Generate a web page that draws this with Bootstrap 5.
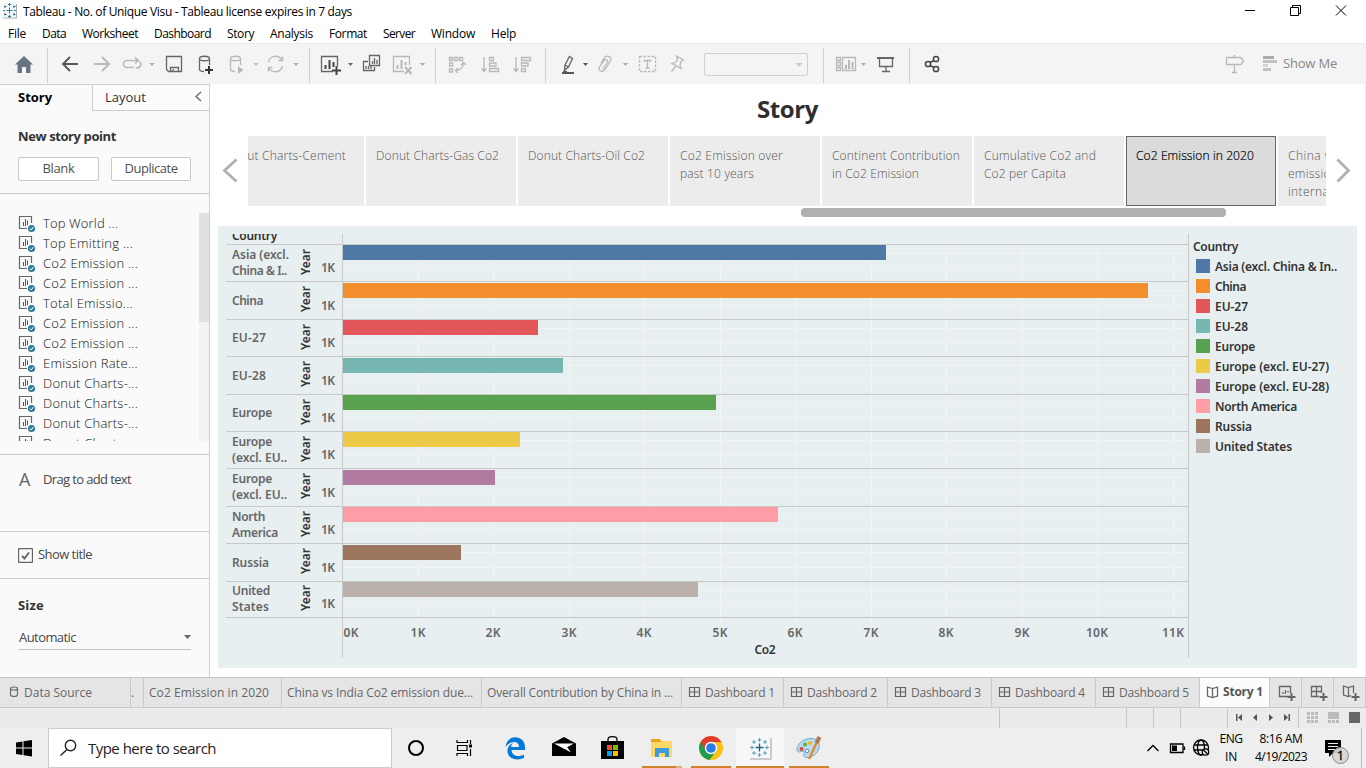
<!DOCTYPE html>
<html lang="en">
<head>
<meta charset="utf-8">
<title>Tableau - No. of Unique Visu</title>
<link href="https://cdn.jsdelivr.net/npm/bootstrap@5.3.0/dist/css/bootstrap.min.css" rel="stylesheet">
<script src="https://cdn.jsdelivr.net/npm/bootstrap@5.3.0/dist/js/bootstrap.bundle.min.js"></script>
<style>
body{width:1366px;height:768px;overflow:hidden;font-family:"Open Sans","Noto Sans",sans-serif;font-size:12px;line-height:16px;color:#000;background:#fff}
svg{display:block;flex:none}
[data-fit]{white-space:pre;display:inline-block}
.titlebar{height:23px}
.menus{height:20px;padding-left:8px}
.menus a{color:#000;text-decoration:none;line-height:21px}
.tools{height:41px;background:#f4f4f4;border-top:1px solid #ebebeb}
.tools button,.plain{border:0;background:none;padding:0;flex:none}
.tools svg,.i{fill:none;stroke:#666;stroke-width:1.3}
.tools svg.off{stroke:#b8b8b8}
.sep{width:1px;height:35px;background:#d0d0d0;margin-top:4px;flex:none}
.picker{width:104px;height:23px;border:1px solid #d0d0d0;border-radius:2px;margin-top:9px}
.work{height:593px}
.side{width:210px;background:#fafafa;border-right:1px solid #d0d0d0;border-top:1px solid #d0d0d0;color:#333;font-size:13px;overflow:hidden}
.tab1{width:92px;padding:4px 0 0 18px;color:#000}
.tab2{width:117px;height:26px;border-left:1px solid #ccc;border-bottom:1px solid #ccc;padding:4px 7px 0 12px;background:#fcfcfc}
.sbtn{height:24px;border:1px solid #c8c8c8;border-radius:2px;background:#fff;color:#505050;line-height:21px;text-align:center}
.rule{border-top:1px solid #c9c9c9}
.points{height:228px;margin-top:19px;overflow:hidden}
.point{height:20px;padding-left:18px;line-height:20px;color:#111;font-weight:300}
.soft{color:#484848}
.main{width:1156px;border-right:1px solid #ededed}
.htitle{height:52px;text-align:center;font-size:24px;font-weight:700;line-height:50px;color:#2e2e2e}
.strip{width:1078px;height:70px;overflow:hidden;gap:2px}
.caption{width:150px;height:70px;flex:none;background:#ececec;color:#555;padding:11px 0 0 10px;line-height:18px;font-size:12px;font-weight:300}
.caption.on{background:#dbdbdb;color:#000;border:1px solid #666;padding:10px 0 0 9px;-webkit-text-stroke:.2px}
.scrolly{width:425px;height:9px;border-radius:4px;background:#b0b0b0;margin:2px 0 0 591px}
.dash{width:1139px;height:442px;margin:9px 0 0 8px;background:#e7eff1;padding:8px 0 0 8px;font-family:"Noto Sans",sans-serif;font-weight:600;color:#666}
.chart{width:963px}
.rowx{border-top:1px solid #c8c8c8}
.lab{width:69px;padding-left:6px;font-size:12px;line-height:16px}
.lab.two{margin-top:-.6px}
.yr{width:22px;color:#333;padding:1px 0 0 3px}
.yr span{writing-mode:vertical-rl;transform:rotate(180deg);font-size:12px}
.legendbox{color:#333;padding:5px 0 0 4px}
.sw{width:14px;height:14px}
.sheets{height:31px;background:#e5e5e5;border-top:1px solid #c6c6c6;border-bottom:1px solid #c9c9c9;color:#666;line-height:29px}
.sheet{border-right:1px solid #c9c9c9;flex:none;padding-left:5px;overflow:hidden;white-space:nowrap;height:29px}
.status{height:20px;background:#ebebeb}
.status div{border-right:1px solid #c6c6c6}
.task{height:40px;background:#eee}
.search{width:344px;border:1px solid #ccc;background:#fff;font-size:15px;line-height:38px;color:#222}
.tray{font-size:12px;line-height:17.5px;text-align:center;padding-top:2px}
</style>
</head>
<body class="d-flex flex-column">
<div class="titlebar d-flex">
<svg width="23" height="23" viewBox="0 0 23 23"><path d="M3 3H16V17H3Z" fill="#f3f6f8"/><path d="M3 18H16.5V4" fill="none" stroke="#aaa"/><path d="M9.500 7.500V13.500M6.500 10.500H12.500M9.500 3V6M8 4.500H11M9.500 15V18M8 16.500H11M3 10.500H5M14 10.500H16M5 5.500V8M4 6.500H6.500M14 5.500V8M13 6.500H15.500M5 13V15.500M4 14.500H6.500M14 13V15.500M13 14.500H15.500" stroke="#2f7fa8" fill="none"/></svg>
<span data-fit="329" style="line-height:23px">Tableau - No. of Unique Visu - Tableau license expires in 7 days</span>
<svg class="ms-auto" width="136" height="23" viewBox="1230 0 136 23" fill="none" stroke="#000"><path d="M1245 10.500H1255M1290.500 7.500H1298.500V15.500H1290.500ZM1292.500 7V5.500H1300.500V13.500H1299M1336 5.500L1346 15.500M1346 5.500L1336 15.500"/></svg>
</div>
<nav class="menus d-flex"></nav>
<div class="tools d-flex">
<button><svg width="47" height="40" viewBox="0 44 47 40"><path d="M24 56L33 64.500H30.500V73H26V67H22V73H17.500V64.500H15L24 56Z" fill="#687482" stroke="none"/></svg></button><i class="sep"></i>
<button><svg width="37" height="40" viewBox="48 44 37 40"><path d="M62.500 64H78M70 57L63 64L70 71" stroke-width="1.800" stroke="#555"/></svg></button>
<button><svg class="off" width="31" height="40" viewBox="85 44 31 40"><path d="M94 64H109.500M102 57L109 64L102 71" stroke-width="1.800"/></svg></button>
<button><svg class="off" width="44" height="40" viewBox="116 44 44 40"><path d="M134 67.500H127A3.500 3.500 0 0 1 127 60.500H138M135 57.500L138.500 60.500L135 63.500M136 67.500A3.500 3.500 0 0 0 140 62" stroke-width="1.600"/><path d="M149.500 63H154.500L152 66Z" fill="#aaa" stroke="none"/></svg></button>
<button><svg width="30" height="40" viewBox="160 44 30 40"><path d="M166.500 56.500H181.500V71.500H168.500L166.500 69.500ZM170.500 71V67.500H178.500V71M173 71V69"/></svg></button>
<button><svg width="32" height="40" viewBox="190 44 32 40"><path d="M199.500 58.500C199.500 55.500 209.500 55.500 209.500 58.500C209.500 61.500 199.500 61.500 199.500 58.500V69.500Q200 71.500 204 71.500M209.500 58.500V65"/><path d="M209 66V74M205 70H213" stroke="#333" stroke-width="2"/></svg></button>
<button><svg class="off" width="40" height="40" viewBox="222 44 40 40"><path d="M230.500 58.500C230.500 55.500 240.500 55.500 240.500 58.500C240.500 61.500 230.500 61.500 230.500 58.500V69.500Q231 71.500 235 71.500M240.500 58.500V65"/><path d="M238 66L243.500 70L238 74ZM253.500 63H258.500L256 66Z" fill="#b8b8b8" stroke="none"/></svg></button>
<button><svg class="off" width="47" height="40" viewBox="262 44 47 40"><path d="M268.500 62A7.300 7.300 0 0 1 282 60M282.500 66A7.300 7.300 0 0 1 269 68M282.500 56.500V60.500H278.500M268.500 71.500V67.500H272.500"/><path d="M293.500 63H298.500L296 66Z" fill="#aaa" stroke="none"/></svg></button><i class="sep"></i>
<button><svg width="48" height="40" viewBox="310 44 48 40"><path d="M333 71.500H321.500V56.500H337.500V66"/><path d="M325.500 69V65M329.500 69V60M333.500 67V62M336.500 66V75M332 70.500H341" stroke="#444" stroke-width="2"/><path d="M348 63H353L350.500 66Z" fill="#666" stroke="none"/></svg></button>
<button><svg width="30" height="40" viewBox="358 44 30 40"><path d="M369.500 55.500H379.500V65.500H369.500ZM368 61.500H363.500V70.500H374.500V67M372.500 64V61M374.500 64V58M377 64V60M366 69V66M368.500 69V66M371 69V66"/></svg></button>
<button><svg class="off" width="47" height="40" viewBox="388 44 47 40"><path d="M404 71.500H393.500V56.500H409.500V65"/><path d="M397.500 69V65M401.500 69V60M405.500 65V62M405 67L411.500 74M411.500 67L405 74" stroke-width="2"/><path d="M420 63H425L422.500 66Z" fill="#aaa" stroke="none"/></svg></button><i class="sep"></i>
<button><svg class="off" width="36" height="40" viewBox="436 44 36 40"><path d="M449.500 57.500H452.500V60.500H449.500ZM454.500 57.500H457.500V60.500H454.500ZM459.500 57.500H462.500V60.500H459.500ZM449.500 63H452.500V66H449.500ZM449.500 69H452.500V72H449.500ZM463.500 63Q463 70 455.500 70.500M461 65L463.500 62.500L466 65M458 68L455.500 70.500L458 73"/></svg></button>
<button><svg class="off" width="33" height="40" viewBox="472 44 33 40"><path d="M484 57V71M481.500 68.500L484 71.500L486.500 68.500M489.500 57.500H493.500V60.500H489.500ZM489.500 63H496V66H489.500ZM489.500 68.500H498.500V71.500H489.500Z"/></svg></button>
<button><svg class="off" width="40" height="40" viewBox="505 44 40 40"><path d="M516 57V71M513.500 68.500L516 71.500L518.500 68.500M521.500 57.500H530.500V60.500H521.500ZM521.500 63H528V66H521.500ZM521.500 68.500H525.500V71.500H521.500Z"/></svg></button><i class="sep"></i>
<button><svg width="46" height="40" viewBox="546 44 46 40"><path d="M569.500 56.500L572.500 58.500L568.500 67L564.500 70L565 65ZM565 65L568.500 67M563 71.500H567"/><path d="M562 73H574" stroke="#555" stroke-width="2"/><path d="M583 63H588L585.500 66Z" fill="#555" stroke="none"/></svg></button>
<button><svg class="off" width="40" height="40" viewBox="592 44 40 40"><path d="M601 63L604.500 57.500C607 54.500 612.500 57 610.500 60.500L605 69.500C602 73 597.500 70.500 599.500 67L604 60.500C605.500 58.500 608.500 60 607.500 62L603 69"/><path d="M623 63H628L625.500 66Z" fill="#aaa" stroke="none"/></svg></button>
<button><svg class="off" width="30" height="40" viewBox="632 44 30 40"><path d="M639.500 56.500H655.500V71.500H639.500Z" stroke-dasharray="2.500 1.500"/><path d="M644.500 62V60.500H650.500V62M647.500 60.500V68M645.500 68H649.500"/></svg></button>
<button><svg class="off" width="42" height="40" viewBox="662 44 42 40"><path d="M676.500 56L683.500 60L681 61.500L680 65.500L681 68.500L672 63.500L675.500 62.500L677.500 59.500ZM676 66L671.500 71.500"/></svg></button>
<div class="picker"><svg class="off" width="102" height="21" viewBox="705 53 102 21"><path d="M795.500 62H802.500L799 66Z" fill="#ccc" stroke="none"/></svg></div>
<span style="width:15px"></span><i class="sep"></i>
<button><svg class="off" width="46" height="40" viewBox="824 44 46 40"><path d="M836.500 57.500H840.500V60.500H836.500ZM836.500 62.500H840.500V65.500H836.500ZM836.500 67.500H840.500V70.500H836.500ZM842.500 57.500H855.500V70.500H842.500Z"/><path d="M846 69V65M849 69V60M852.500 69V62" stroke-width="2"/><path d="M861 63H866L863.500 66Z" fill="#aaa" stroke="none"/></svg></button>
<button><svg width="39" height="40" viewBox="870 44 39 40"><path d="M879.500 58V66.500H892.500V58M886 67V71M882 71.500H890"/><path d="M877 58H894" stroke-width="2"/></svg></button><i class="sep"></i>
<button><svg width="40" height="40" viewBox="910 44 40 40"><g stroke="#444" stroke-width="1.500"><circle cx="928" cy="64" r="2.600"/><circle cx="936" cy="59" r="2.600"/><circle cx="936" cy="69" r="2.600"/><path d="M930 62.500L934 60.500M930 65.500L934 67.500"/></g></svg></button>
<button class="ms-auto d-flex" style="color:#888;font-size:13px;line-height:38px"><svg class="off" width="63" height="40" viewBox="1220 44 63 40"><path d="M1226.500 57.500H1241L1243.500 61L1241 64.500H1226.500ZM1234.500 55V57M1234.500 65V72M1232 72.500H1237"/><path d="M1263 57.500H1274" stroke="#aaa" stroke-width="3"/><path d="M1263 61.500H1277" stroke-width="3" stroke="#c2c2c2"/><path d="M1263 65.500H1268" stroke="#d4d4d4" stroke-width="3"/><path d="M1263 69.500H1271" stroke-width="3" stroke="#c2c2c2"/></svg><span data-fit="54">Show Me</span><span style="width:29px"></span></button>
</div>
<div class="work d-flex">
<aside class="side flex-shrink-0">
<div class="d-flex"><div class="tab1"><b data-fit="34">Story</b></div><div class="tab2 d-flex justify-content-between"><span data-fit="41">Layout</span><svg class="i" width="7" height="16" viewBox="0 0 7 16"><path d="M6 3L1 7.500L6 12"/></svg></div></div>
<div style="padding:17px 0 0 18px;height:46px"><b data-fit="98">New story point</b></div>
<div class="d-flex" style="padding-left:18px;height:36px;gap:12px"><div class="sbtn" style="width:81px"><span data-fit="32">Blank</span></div><div class="sbtn" style="width:80px"><span data-fit="53">Duplicate</span></div></div>
<div class="rule"></div>
<div class="points d-flex justify-content-between"><div id="pts"></div><div style="width:10px;background:#f3f3f3"><div style="height:109px;background:#e0e0e0"></div></div></div>
<div class="rule soft" style="margin-top:13px;height:77px;padding:14px 0 0 19px"><div class="d-flex align-items-center"><span style="font:400 18px/20px 'Open Sans';width:24px;color:#666">A</span><span data-fit="88">Drag to add text</span></div></div>
<div class="rule soft d-flex align-items-center" style="height:47px;padding-left:18px;gap:5px"><svg class="i" width="15" height="15" viewBox="0 0 15 15"><rect x=".5" y=".5" width="14" height="14" rx="1"/><path d="M4 8L6.500 10.500L11 4.500" stroke-width="2"/></svg><span data-fit="54" style="margin-top:-2px">Show title</span></div>
<div class="rule" style="height:99px;padding:18px 18px 0"><b data-fit="26">Size</b><div class="soft d-flex justify-content-between align-items-center" style="margin-top:14px;height:23px;border-bottom:1px solid #c4c4c4;padding-left:1px"><span data-fit="57" style="margin-top:-2px">Automatic</span><svg width="8" height="5" viewBox="0 0 8 5" style="margin-top:-2px"><path d="M1 0H8L4.500 4Z" fill="#666"/></svg></div></div>
</aside>
<main class="main">
<div class="htitle"><span data-fit="61">Story</span></div>
<div class="d-flex"><svg class="i" width="38" height="70" viewBox="210 136 38 70"><path d="M236.500 159.500L224.500 170.500L236.500 181.500" stroke="#b0b0b0" stroke-width="2.800"/></svg>
<div class="strip d-flex" id="strip"></div>
<svg class="i" width="38" height="70" viewBox="1327 136 38 70"><path d="M1338.500 159.500L1349.500 170.500L1338.500 181.500" stroke="#b0b0b0" stroke-width="2.800"/></svg></div>
<div class="scrolly"></div>
<div class="dash d-flex"><div class="chart" id="chart"></div><div class="legendbox" id="leg"></div></div>
</main>
</div>
<div class="sheets d-flex" id="sheets"></div>
<div class="status d-flex"><div style="width:1000px"></div><div style="width:127px"></div><div style="width:27px"></div><div style="width:27px"></div><div style="width:47px"></div><div style="width:71px"><svg width="70" height="20" viewBox="1228 708 70 20" fill="#555"><path d="M1236 714H1237.500V721H1236ZM1242 714V721L1238 717.500ZM1257 714V721L1253 717.500ZM1269 714V721L1273 717.500ZM1284 714V721L1288 717.500ZM1288.500 714H1290V721H1288.500Z"/></svg></div><svg width="66" height="20" viewBox="1299 708 66 20"><path d="M1307 712h3v3h-3zM1311 712h3v3h-3zM1315 712h3v3h-3zM1307 716h3v3h-3zM1311 716h3v3h-3zM1315 716h3v3h-3zM1307 720h3v3h-3zM1311 720h3v3h-3zM1315 720h3v3h-3zM1328 712h11v7h-11zM1328 720h3v3h-3zM1332 720h3v3h-3zM1336 720h3v3h-3z" fill="#bbb"/><path d="M1349 712h11v11h-11z" fill="#666"/></svg></div>
<div class="task d-flex">
<svg width="48" height="40" viewBox="0 728 48 40"><path d="M16 742.500L22.500 741.500V747.500H16ZM23.500 741.300L32 740V747.500H23.500ZM16 748.500H22.500V755L16 754ZM23.500 748.500H32V756.500L23.500 755.200Z"/></svg>
<div class="search d-flex"><svg width="39" height="38" viewBox="49 729 39 38" fill="none" stroke="#222" stroke-width="1.400"><circle cx="70.500" cy="745.500" r="5.200"/><path d="M67 749.500L60.500 755.500"/></svg><span data-fit="128">Type here to search</span></div>
<svg width="444" height="40" viewBox="392 728 444 40">
<circle cx="416" cy="748" r="7" fill="none" stroke="#000" stroke-width="2"/>
<path d="M457 740V742.500H467.500V740M457 756V753.500H467.500V756M457.500 745.500H467V750.500H457.500ZM470.500 740V744M470.500 749V756" fill="none" stroke="#000" stroke-width="1.200"/><path d="M469 744.500h3v3h-3z"/>
<path d="M505.500 747C507 733.500 525 734.500 525 747.500V750H511.500C512 757 520 757 524 754.500V758C516 761.500 507 758.500 507.500 750C508 746 510.500 744 513 743C511.500 744 511.200 746 511.200 747H519C519 740 510 740.500 505.500 747Z" fill="#0078d7"/>
<path d="M552 743.500L564 737L576 743.500V756H552Z"/><path d="M554 743.500H574L564.500 749Z" fill="#fff"/><path d="M564.500 749L574 743.500L571.500 752Z" fill="#000"/><path d="M563 748L571 752.500L567 747Z" fill="#fff"/>
<path d="M608 742V739.500Q608 736.700 612.500 736.700T617 739.500V742" fill="none" stroke="#000" stroke-width="1.300"/><path d="M601 741H624V759H601Z"/><path d="M607 745h5v5h-5z" fill="#f25022"/><path d="M613 745h5v5h-5z" fill="#7fba00"/><path d="M607 751h5v5h-5z" fill="#00a4ef"/><path d="M613 751h5v5h-5z" fill="#ffb900"/>
<path d="M651 739H660L662 741H672V757H651Z" fill="#ffd765"/><path d="M651 739H660L661 742H651Z" fill="#e8a317"/><path d="M655 748H669V757H665V753H659V757H655Z" fill="#3f9adb"/>
<path d="M642 766H676V768H642ZM691 766H731V768H691ZM789 766H829V768H789Z" fill="#cf812b"/><path d="M676 766H682V768H676Z" fill="#e0b07d"/>
<circle cx="711" cy="748" r="12" fill="#fbc116"/><path d="M711 748L700.600 742A12 12 0 0 0 709.500 759.900L716 751Z" fill="#1e9e4a"/><path d="M711 748V742H721.400A12 12 0 0 0 700.600 742L705.800 751Z" fill="#e33b2e"/><circle cx="711" cy="748" r="6.200" fill="#fff"/><circle cx="711" cy="748" r="4.800" fill="#2a7de9"/>
<path d="M736 728H784V766H736Z" fill="#f8f8f8"/><path d="M736 766H784V768H736Z" fill="#cf812b"/><path d="M749.500 737.500H770V758.500H749.500Z" fill="#f5f8fa"/><path d="M750 759H771V738" stroke="#bbb" stroke-width="1.500" fill="none"/><path d="M759.500 743.500V751.500M755.500 747.500H763.500" stroke="#235e86" stroke-width="1.300"/><path d="M759.500 738V742M757.500 740H761.500M759.500 753V757M757.500 755H761.500M752 745.500V749.500M750 747.500H754M767 745.500V749.500M765 747.500H769M754 740V744M752 742H756M765 740V744M763 742H767M754 751V755M752 753H756M765 751V755M763 753H767" stroke="#5b9abb" fill="none"/>
<path d="M797 750C797 743 804 738.500 811 738.500C818 738.500 820 743 819 748C817 756 808 759 805 757C802 755 806 752 803 751C800 751 799 754 797 750Z" fill="#b9dcf0" stroke="#6caacb"/><circle cx="801.500" cy="749" r="2" fill="#d9453c"/><circle cx="805" cy="744.500" r="2" fill="#5faf3c"/><circle cx="810" cy="743" r="2" fill="#f5b51c"/><circle cx="807" cy="751" r="1.800" fill="#fff" stroke="#5a93b5"/><path d="M817 742L809 759" stroke="#e08a2c" stroke-width="2.400"/><path d="M819.500 737L816.500 743" stroke="#a87b52" stroke-width="4"/>
</svg>
<svg class="ms-auto" width="70" height="40" viewBox="1144 728 70 40" fill="none" stroke="#000" stroke-width="1.300"><path d="M1147.500 751L1153 745.500L1158.500 751M1170.500 744H1183V752.500H1170.500ZM1184.500 746.500V750"/><path d="M1172 745.500h5v5.500h-5z" fill="#000" stroke="none"/><circle cx="1201" cy="747.500" r="7.500"/><ellipse cx="1201" cy="747.500" rx="3.500" ry="7.500"/><path d="M1194 745H1208M1194 750H1208"/><circle cx="1205.500" cy="752" r="3.200" fill="#eee"/><path d="M1203.500 750L1207.500 754"/></svg>
<div class="tray" style="width:34px"><span data-fit="23">ENG</span><br><span data-fit="12">IN</span></div>
<div class="tray" style="width:66px"><span data-fit="43">8:16 AM</span><br><span data-fit="52">4/19/2023</span></div>
<svg width="52" height="40" viewBox="1314 728 52 40"><path d="M1325 740H1341V753H1333L1329 757V753H1325Z"/><path d="M1328 743.500H1338M1328 746.500H1338M1328 749.500H1335" stroke="#eee"/><circle cx="1340.500" cy="755.500" r="8" fill="#d6d6d6" fill-opacity=".93" stroke="#888"/><text x="1340.500" y="760" font-size="13" stroke="#000" stroke-width=".3" text-anchor="middle">1</text><path d="M1361.500 728V768" stroke="#bbb"/></svg>
</div>
<script>
const $=id=>document.getElementById(id);
// menu bar: label, left edge, width
const menu=[["File",8,18],["Data",42,24],["Worksheet",82,56],["Dashboard",154,57],["Story",227,27],["Analysis",270,43],["Format",329,38],["Server",383,32],["Window",431,44],["Help",491,25]];
document.querySelector(".menus").innerHTML=menu.map((m,i)=>`<a data-fit="${m[2]}" style="margin-right:${i<9?menu[i+1][1]-m[1]-m[2]:0}px">${m[0]}</a>`).join("");
const pts=[["Top World ...",75],["Top Emitting ...",90],["Co2 Emission ...",95],["Co2 Emission ...",95],["Total Emissio...",90],["Co2 Emission ...",95],["Co2 Emission ...",95],["Emission Rate...",95],["Donut Charts-...",95],["Donut Charts-...",95],["Donut Charts-...",95],["Donut Charts-...",95]];
$("pts").innerHTML=pts.map(p=>`<div class="point d-flex"><svg width="25" height="20" viewBox="18 213 25 20"><path d="M27 228.500H19.500V216.500H31.500V223" fill="none" stroke="#666" stroke-width="1.200"/><path d="M23.500 226V222M25.500 226V219M27.500 225V220.500" stroke="#555"/><circle cx="31.500" cy="228.500" r="3.600" fill="#2f7b9d"/><path d="M29.800 228.500L31.200 230L33.500 227" fill="none" stroke="#fff"/></svg><span data-fit="${p[1]}">${p[0]}</span></div>`).join("");
const caps=[[["Donut Charts-Cement",122]],[["Donut Charts-Gas Co2",123]],[["Donut Charts-Oil Co2",117]],[["Co2 Emission over",103],["past 10 years",74]],[["Continent Contribution",128],["in Co2 Emission",87]],[["Cumulative Co2 and",112],["Co2 per Capita",82]],[["Co2 Emission in 2020",118]],[["China vs India Co2",108],["emission due to",90],["international trade",108]]];
$("strip").innerHTML=caps.map((c,i)=>`<div class="caption${i==6?" on":""}"${i?"":' style="margin-left:-34px"'}>${c.map(l=>`<span data-fit="${l[1]}">${l[0]}</span>`).join("<br>")}</div>`).join("");
// chart rows: label lines, top of row line, bar top, bar end, 1K line, colour
const rows=[[[["Asia (excl.",57],["China & I..",55]],244,245,886,267,"#4e79a7"],[[["China",31]],281,283,1148,305,"#f28e2b"],[[["EU-27",34]],319,320,538,342,"#e15759"],[[["EU-28",34]],356,358,563,380,"#76b7b2"],[[["Europe",40]],394,395,716,417,"#59a14f"],[[["Europe",40],["(excl. EU..",55]],431,432,520,454,"#edc948"],[[["Europe",40],["(excl. EU..",55]],468,470,495,492,"#b07aa1"],[[["North",33],["America",46]],506,507,778,529,"#ff9da7"],[[["Russia",37]],543,545,461,567,"#9c755f"],[[["United",38],["States",37]],581,582,698,603,"#bab0ac"]];
const vx=[418,493,569,644,720,795,871,946,1022,1097,1173];
const frame=(y,h)=>`<path d="M342.500 ${y}V${y+h}M1188.500 ${y}V${y+h}" stroke="#c8c8c8"/>`;
let h=`<div class="d-flex" style="height:10px;overflow:hidden"><div style="width:111px;padding-left:6px;color:#333;margin-top:-6px"><span data-fit="45">Country</span></div><svg width="852" height="10" viewBox="337 234 852 10">${frame(234,10)}</svg></div>`;
rows.forEach((r,i)=>{const y=r[1],n=i<9?rows[i+1][1]:617,H=n-y-1;
h+=`<div class="rowx d-flex align-items-center" style="height:${H+1}px"><div class="lab${r[0].length>1?" two":""}">${r[0].map(l=>`<span data-fit="${l[1]}">${l[0]}</span>`).join("<br>")}</div><div class="yr"><span data-fit="26" data-v="1">Year</span></div><svg width="872" height="${H}" viewBox="317 ${y+1} 872 ${H}"><path d="M337 ${i<1?253.5:r[1]+9.5}H1188M337 ${r[4]+.5}H1188${vx.map(x=>`M${x+.5} ${y+1}V${n}`).join("")}" stroke="#f2f3f3" fill="none"/>${frame(y,H+1)}<rect x="343" y="${r[2]}" width="${r[3]-343}" height="15" fill="${r[5]}"/><text x="321" y="${r[4]+5}" font-size="12" fill="#666" textLength="14">1K</text></svg></div>`});
h+=`<div class="rowx" style="padding-left:111px"><svg width="852" height="40" viewBox="337 618 852 40"><path d="${vx.map(x=>`M${x+.5} 618V622`).join("")}" stroke="#f6f6f6"/>${frame(618,40)}${[351,...vx].map((x,i)=>`<text x="${x}" y="637" font-size="12" text-anchor="middle" textLength="${i>9?22:15}" fill="#666">${i}K</text>`).join("")}<text x="765" y="654" font-size="12" text-anchor="middle" textLength="21" fill="#333">Co2</text></svg></div>`;
$("chart").innerHTML=h;
const leg=[["Asia (excl. China & In..",122],["China",31],["EU-27",33],["EU-28",33],["Europe",40],["Europe (excl. EU-27)",114],["Europe (excl. EU-28)",114],["North America",82],["Russia",37],["United States",77]];
$("leg").innerHTML='<div style="height:19px"><span data-fit="45">Country</span></div>'+leg.map((l,i)=>`<div class="d-flex" style="height:20px;padding:1px 0 0 3px;gap:5px"><i class="sw" style="background:${rows[i][5]}"></i><span data-fit="${l[1]}">${l[0]}</span></div>`).join("");
const dicon=`<svg class="i" width="18" height="29" viewBox="0 0 18 29"><path d="M2.500 9.500H12.500V18.500H2.500ZM7.500 9.500V18.500M2.500 14H12.500" stroke-width="1.200"/></svg>`;
const plus='<path d="M16.500 15V23M12.500 19H20.500" stroke-width="2"/>';
let s=`<div class="sheet d-flex" style="width:131px"><svg class="i" width="19" height="29" viewBox="5 0 19 29"><path d="M10.500 10.500C10.500 8.500 17.500 8.500 17.500 10.500C17.500 12.500 10.500 12.500 10.500 10.500V17Q11 18.500 14 18.500T17.500 17V10.500" stroke-width="1.100"/></svg><span data-fit="68">Data Source</span></div><div class="sheet" style="width:13px;padding-left:0">.</div><div class="sheet" style="width:138px"><span data-fit="120">Co2 Emission in 2020</span></div><div class="sheet" style="width:200px"><span data-fit="186">China vs India Co2 emission due...</span></div><div class="sheet" style="width:200px"><span data-fit="186">Overall Contribution by China in ...</span></div>`;
[102,104,104,104,104].forEach((w,i)=>s+=`<div class="sheet d-flex" style="width:${w}px">${dicon}<span data-fit="70">Dashboard ${i+1}</span></div>`);
s+=`<div class="sheet d-flex" style="width:70px;background:#fcfcfc;color:#555"><svg class="i" width="18" height="29" viewBox="0 0 18 29"><path d="M2.500 9L7.500 10.500L12.500 9V18L7.500 19.500L2.500 18ZM7.500 10.500V19.500"/></svg><b data-fit="40" style="line-height:27px">Story 1</b></div>`;
["M15 18.500H4.500V8.500H15.500V15M8 16V14M10.500 16V12M13 14.500V13","M12 18.500H4.500V8.500H14.500V15M9.500 8.500V18.500M4.500 13.500H14.500","M12 17.500L9.500 18.500L4.500 17V8L9.500 9.500L14.500 8V15M9.500 9.500V18.500"].forEach((p,i)=>s+=`<div class="sheet" style="width:32px"><svg class="i" width="26" height="29" viewBox="0 0 26 29"><path d="${p}"/>${plus}</svg></div>`);
$("sheets").innerHTML=s;
// tighten or loosen each label so that it takes the width set for it
document.querySelectorAll("[data-fit]").forEach(e=>{const v=e.dataset.v,w=v?e.offsetHeight:e.getBoundingClientRect().width,n=e.textContent.length,d=(e.dataset.fit-w)/n;e.style.letterSpacing=d+"px"});
</script>
</body>
</html>
